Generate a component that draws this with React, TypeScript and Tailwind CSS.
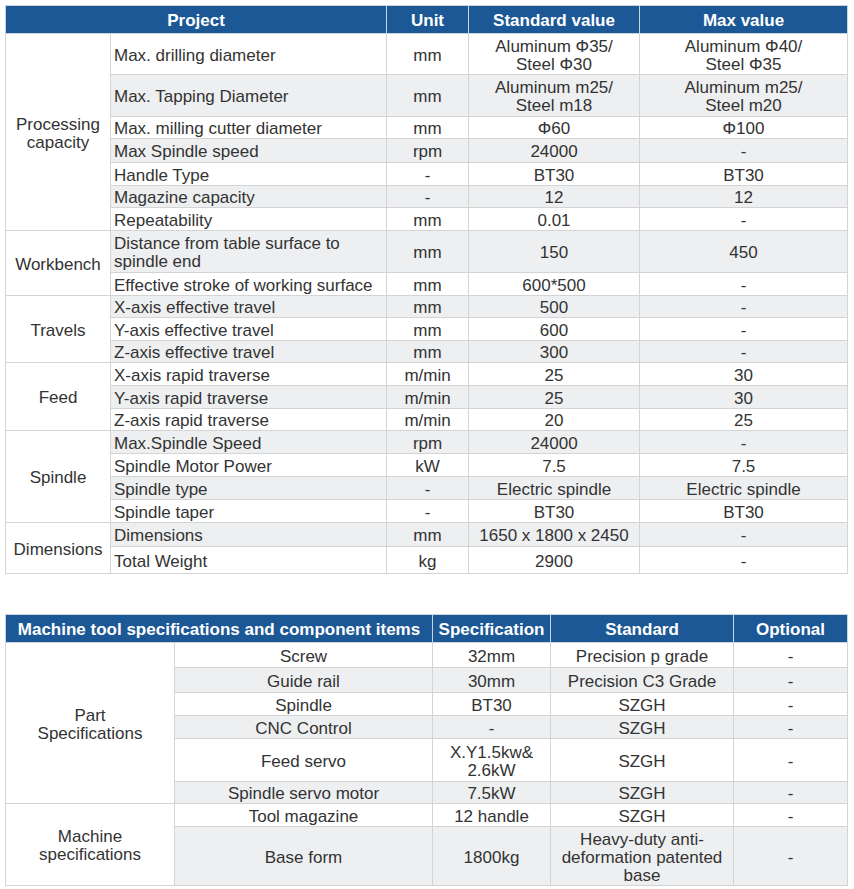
import React from 'react';

type Row = [string, string, string, string, string];
type Group = { name: string; rows: Row[] };

const specGroups: Group[] = [
  {
    name: 'Processing\ncapacity',
    rows: [
      ['Max. drilling diameter', 'mm', 'Aluminum Φ35/\nSteel Φ30', 'Aluminum Φ40/\nSteel Φ35', 'h-[41px]'],
      ['Max. Tapping Diameter', 'mm', 'Aluminum m25/\nSteel m18', 'Aluminum m25/\nSteel m20', 'h-[42px]'],
      ['Max. milling cutter diameter', 'mm', 'Φ60', 'Φ100', 'h-[22px]'],
      ['Max Spindle speed', 'rpm', '24000', '-', 'h-[24px]'],
      ['Handle Type', '-', 'BT30', 'BT30', 'h-[23px]'],
      ['Magazine capacity', '-', '12', '12', 'h-[22px]'],
      ['Repeatability', 'mm', '0.01', '-', 'h-[23px]'],
    ],
  },
  {
    name: 'Workbench',
    rows: [
      ['Distance from table surface to\nspindle end', 'mm', '150', '450', 'h-[42px]'],
      ['Effective stroke of working surface', 'mm', '600*500', '-', 'h-[23px]'],
    ],
  },
  {
    name: 'Travels',
    rows: [
      ['X-axis effective travel', 'mm', '500', '-', 'h-[22px]'],
      ['Y-axis effective travel', 'mm', '600', '-', 'h-[23px]'],
      ['Z-axis effective travel', 'mm', '300', '-', 'h-[22px]'],
    ],
  },
  {
    name: 'Feed',
    rows: [
      ['X-axis rapid traverse', 'm/min', '25', '30', 'h-[23px]'],
      ['Y-axis rapid traverse', 'm/min', '25', '30', 'h-[23px]'],
      ['Z-axis rapid traverse', 'm/min', '20', '25', 'h-[22px]'],
    ],
  },
  {
    name: 'Spindle',
    rows: [
      ['Max.Spindle Speed', 'rpm', '24000', '-', 'h-[23px]'],
      ['Spindle Motor Power', 'kW', '7.5', '7.5', 'h-[23px]'],
      ['Spindle type', '-', 'Electric spindle', 'Electric spindle', 'h-[23px]'],
      ['Spindle taper', '-', 'BT30', 'BT30', 'h-[23px]'],
    ],
  },
  {
    name: 'Dimensions',
    rows: [
      ['Dimensions', 'mm', '1650 x 1800 x 2450', '-', 'h-[24px]'],
      ['Total Weight', 'kg', '2900', '-', 'h-[27px]'],
    ],
  },
];

const componentGroups: Group[] = [
  {
    name: 'Part\nSpecifications',
    rows: [
      ['Screw', '32mm', 'Precision p grade', '-', 'h-[25px]'],
      ['Guide rail', '30mm', 'Precision C3 Grade', '-', 'h-[25px]'],
      ['Spindle', 'BT30', 'SZGH', '-', 'h-[23px]'],
      ['CNC Control', '-', 'SZGH', '-', 'h-[23px]'],
      ['Feed servo', 'X.Y1.5kw&\n2.6kW', 'SZGH', '-', 'h-[43px]'],
      ['Spindle servo motor', '7.5kW', 'SZGH', '-', 'h-[22px]'],
    ],
  },
  {
    name: 'Machine\nspecifications',
    rows: [
      ['Tool magazine', '12 handle', 'SZGH', '-', 'h-[23px]'],
      ['Base form', '1800kg', 'Heavy-duty anti-\ndeformation patented\nbase', '-', 'h-[59px]'],
    ],
  },
];

const cell = 'border border-[#d4d4d4] px-[3px] pt-[3px] pb-0 leading-[18px] align-middle whitespace-pre-line';
const head = 'border border-[#c9d3de] bg-[#1c5895] text-white font-bold text-center px-[3px] pt-[3px] pb-0 leading-[18px]';

function SpecTable({
  groups,
  headers,
  cols,
  itemAlign,
}: {
  groups: Group[];
  headers: [string, string, string, string];
  cols: string[];
  itemAlign: string;
}) {
  let index = 0;
  return (
    <table className="table-fixed border-collapse w-[842px]">
      <colgroup>
        {cols.map((c, i) => (
          <col key={i} className={c} />
        ))}
      </colgroup>
      <thead>
        <tr className="h-[28px]">
          <th colSpan={2} className={head}>{headers[0]}</th>
          <th className={head}>{headers[1]}</th>
          <th className={head}>{headers[2]}</th>
          <th className={head}>{headers[3]}</th>
        </tr>
      </thead>
      <tbody>
        {groups.map((g) =>
          g.rows.map((r, ri) => {
            const shade = index++ % 2 === 1 ? 'bg-[#eeeff0]' : 'bg-white';
            return (
              <tr key={g.name + r[0]} className={r[4]}>
                {ri === 0 && (
                  <td rowSpan={g.rows.length} className={`${cell} bg-white text-center`}>
                    {g.name}
                  </td>
                )}
                <td className={`${cell} ${shade} ${itemAlign}`}>{r[0]}</td>
                <td className={`${cell} ${shade} text-center`}>{r[1]}</td>
                <td className={`${cell} ${shade} text-center`}>{r[2]}</td>
                <td className={`${cell} ${shade} text-center`}>{r[3]}</td>
              </tr>
            );
          })
        )}
      </tbody>
    </table>
  );
}

export default function App() {
  return (
    <div className="bg-white min-h-screen pt-[5px] pl-[5px] text-[17px] text-[#333333] font-['Liberation_Sans',Arial,sans-serif]">
      <SpecTable
        groups={specGroups}
        headers={['Project', 'Unit', 'Standard value', 'Max value']}
        cols={['w-[105px]', 'w-[276px]', 'w-[82px]', 'w-[171px]', 'w-[208px]']}
        itemAlign="text-left"
      />
      <div className="h-[40px]" />
      <SpecTable
        groups={componentGroups}
        headers={['Machine tool specifications and component items', 'Specification', 'Standard', 'Optional']}
        cols={['w-[169px]', 'w-[258px]', 'w-[118px]', 'w-[183px]', 'w-[114px]']}
        itemAlign="text-center"
      />
    </div>
  );
}
